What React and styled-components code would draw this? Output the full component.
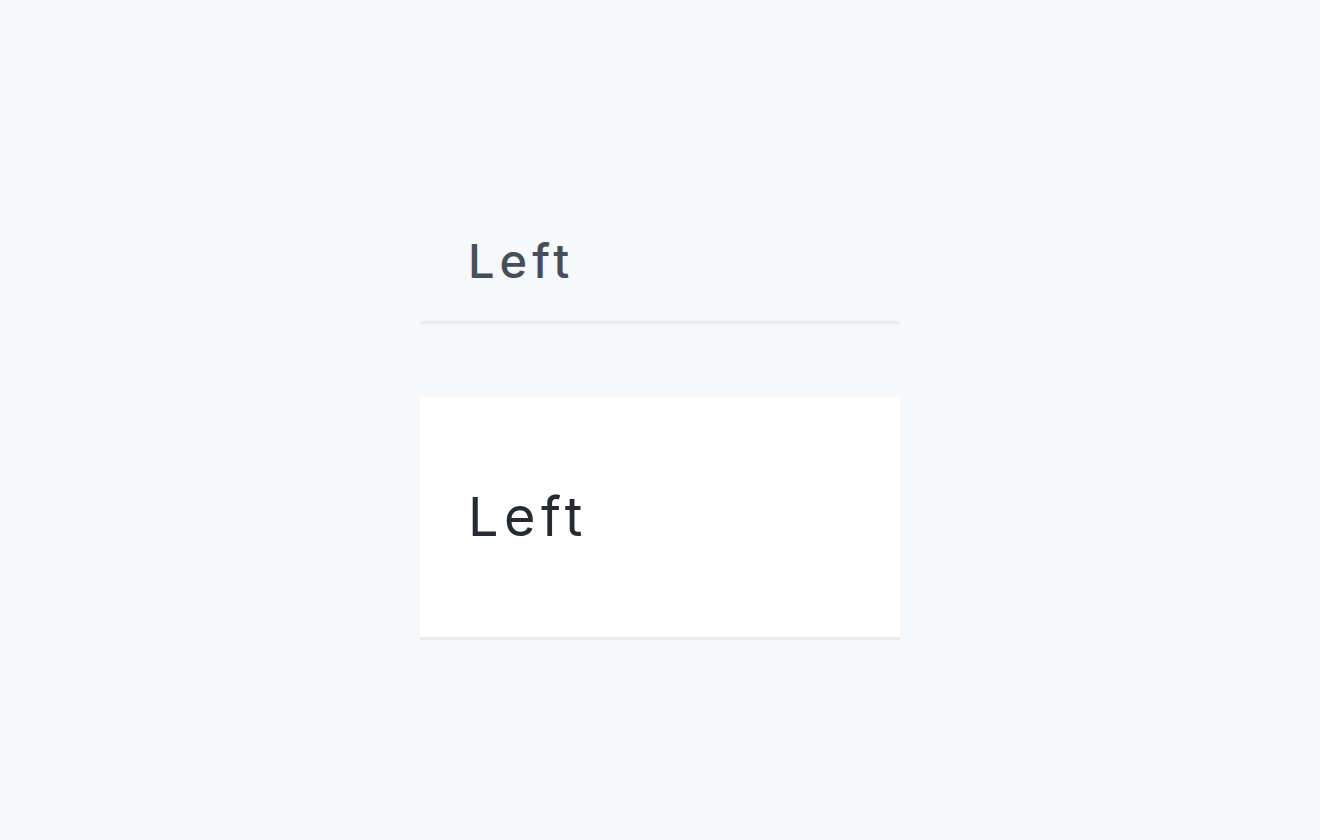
import React from 'react';
import styled, { createGlobalStyle } from 'styled-components';

const GlobalStyle = createGlobalStyle`
  html, body {
    margin: 0;
    padding: 0;
    background: #f7f8fa;
  }
  body {
    font-family: Inter, "Noto Sans", sans-serif;
  }
`;

const App = () => {
  return (
    <Page>
      <GlobalStyle />
      <Stack>
        <HeadCell>Left</HeadCell>
        <BodyCell>Left</BodyCell>
      </Stack>
    </Page>
  );
};

const Page = styled.div`
  width: 100%;
  height: 840px;
  display: flex;
  align-items: center;
  justify-content: center;
`;
const Stack = styled.div`
  width: 480px;
  display: flex;
  flex-direction: column;
  gap: 73px;
`;
const HeadCell = styled.div`
  height: 120px;
  display: flex;
  align-items: center;
  padding: 0 48px;
  border-bottom: 3px solid #e9ebef;
  color: #454e59;
  font-size: 47px;
  font-weight: 500;
  letter-spacing: 5px;
`;
const BodyCell = styled.div`
  height: 240px;
  display: flex;
  align-items: center;
  padding: 0 48px;
  background: #fff;
  border-bottom: 3px solid #e9ebef;
  color: #272b31;
  font-size: 54px;
  font-weight: 400;
  letter-spacing: 5.5px;
`;

export default App;
